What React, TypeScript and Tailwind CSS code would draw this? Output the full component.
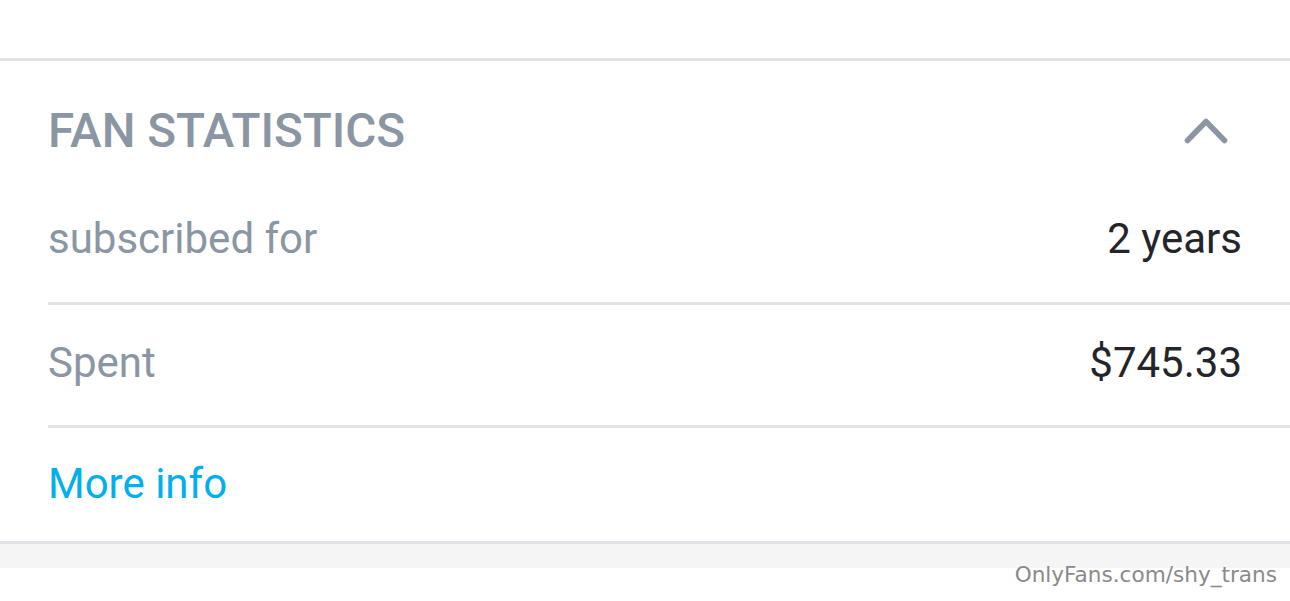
export default function App() {
  return (
    <div className="relative w-[1290px] h-[601px] bg-white overflow-hidden" style={{ fontFamily: "Roboto, 'Noto Sans', sans-serif" }}>
      <div className="h-[58px]" />
      <div className="border-t-[3px] border-b-[3px] border-[#e1e3e6] bg-white">
        <div className="pl-[48px]">
          <div className="pt-[42px] flex items-center justify-between pr-[60px]">
            <span className="text-[47.6px] leading-[56px] font-medium text-[#8a96a3]">FAN STATISTICS</span>
            <svg width="48" height="30" viewBox="0 0 48 30" fill="none">
              <path d="M5.5 24.5 L24 5.5 L42.5 24.5" stroke="#8a96a3" strokeWidth="5.5" strokeLinecap="round" strokeLinejoin="round" />
            </svg>
          </div>
          <div className="pt-[56px] pb-[39px] flex justify-between pr-[48px] border-b-[3px] border-[#e1e3e6]">
            <span className="text-[42px] leading-[48px] text-[#8a96a3]">subscribed for</span>
            <span className="text-[42px] leading-[48px] text-[#242529]">2 years</span>
          </div>
          <div className="pt-[34px] pb-[38px] flex justify-between pr-[48px] border-b-[3px] border-[#e1e3e6]">
            <span className="text-[42px] leading-[48px] text-[#8a96a3]">Spent</span>
            <span className="text-[42px] leading-[48px] text-[#242529]">$745.33</span>
          </div>
          <div className="pt-[32px] pb-[33px] flex">
            <span className="text-[42px] leading-[48px] text-[#00aff0]">More info</span>
          </div>
        </div>
      </div>
      <div className="h-[24px] bg-[#f5f5f5]" />
      <span className="absolute right-[13px] top-[564px] text-[21.6px] leading-none text-[#8a8a8a]" style={{ fontFamily: "'DejaVu Sans', sans-serif" }}>OnlyFans.com/shy_trans</span>
    </div>
  );
}
